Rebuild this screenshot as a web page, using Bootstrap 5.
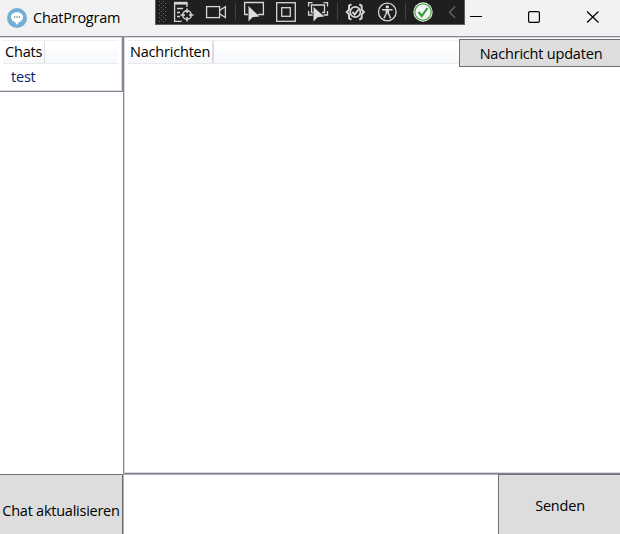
<!DOCTYPE html>
<html lang="de">
<head>
<meta charset="utf-8">
<meta name="viewport" content="width=device-width, initial-scale=1">
<title>ChatProgram</title>
<link href="https://cdn.jsdelivr.net/npm/bootstrap@5.3.0/dist/css/bootstrap.min.css" rel="stylesheet">
<style>
body{font-family:"Open Sans","Noto Sans",sans-serif;font-size:14.5px;line-height:20px;color:#000;letter-spacing:-.2px}
.window{height:534px;width:620px;background:#fff}
.titlebar{height:36px;background:#f2f2f2;padding-left:7px}
.app-title{margin-left:6px;letter-spacing:-.25px}
.debugbar{left:155px;top:0;width:310px;height:25px;background:#1f1f1f;border:solid #625d5c;border-width:0 1px 1px}
.debugbar svg{margin-left:-1px}
.caption-buttons{width:150px;height:34px}
.sidebar{width:123px}
.chat-list{height:56px;border:solid #828790;border-width:1px 1px 1px 0;box-shadow:inset 0 -1px #d5d8e0,inset -1px 0 #d5d8e0,inset 0 1px #d5d8e0;padding:3px 4px 0 3px}
.messages{height:438px;border:solid #828790;border-width:1px 0 1px 1px;box-shadow:inset 0 1px #d5d8e0,inset 1px 0 #d8dbe1,inset 0 -1px #d5d8e0;padding:3px 0 0 4px}
.column-head{height:24px;background:linear-gradient(#fff 40%,#fbfcfd 42%,#f7f8fa);border-top:1px solid #f0f0f0;border-bottom:1px solid #e8ebee}
.column-head span{display:block;padding:1px 0 0 2px;border-right:1px solid #dcdfe2;height:22px;white-space:nowrap}
.chats-col{width:42px}
.column-head .news-col{width:86px;border-right-width:2px}
.chat-entry{color:#042271;padding:3px 0 0 8px}
.wpf-btn{background:#ddd;border:1px solid #707070;border-radius:0;color:#000;font-size:inherit;line-height:20px;letter-spacing:inherit;padding:0;white-space:nowrap}
.update-btn{left:459px;top:39px;width:162px;height:28px;padding:2px 0 0 2px}
.refresh-btn{height:60px;padding-top:13px;border-left:0;border-bottom:0;letter-spacing:-.25px}
.send-btn{width:122px;border-bottom:0;border-right:0;padding:2px 0 0 1px}
.message-input{border:1px solid #abadb3;border-right-width:0;border-bottom:0;border-radius:0;resize:none;outline:0}
</style>
</head>
<body class="m-0 overflow-hidden">
<main class="window position-relative d-flex flex-column overflow-hidden">
  <header class="titlebar d-flex flex-shrink-0 justify-content-between">
    <div class="d-flex align-items-center">
      <svg width="20" height="20" viewBox="0 0 20 20"><circle cx="10" cy="10" r="10" fill="#71afd3"/><path d="M4 9C4 2.800 16 2.800 16 9c0 3-2 4.500-4 5l-2 3-2-3C6 13.500 4 12 4 9Z" fill="#fff"/><path d="M7 9h1.300M9.400 9h1.300M11.800 9h1.300" stroke="#345" stroke-width="1.200"/></svg>
      <span class="app-title">ChatProgram</span>
    </div>
    <svg class="caption-buttons" viewBox="470 0 150 34" fill="none" stroke="#000" stroke-width="1.200"><path d="M470 16.500h12M587 11.500l11.500 11M598.500 11.500l-11.500 11"/><rect x="528.600" y="11.600" width="10.800" height="10.800" rx="1.300"/></svg>
  </header>
  <div class="debugbar position-absolute">
    <svg class="d-block" width="310" height="24" viewBox="155 0 310 24" fill="none" stroke="#d6d6d6" stroke-width="1.300">
      <defs>
        <pattern id="grip" x="159" y="1" width="4" height="4" patternUnits="userSpaceOnUse"><path d="M0 0h1v1H0zM2 2h1v1H2z" fill="#666" stroke="none"/></pattern>
      </defs>
      <path d="M159 1h7v22h-7z" fill="url(#grip)" stroke="none"/>
      <path d="M174 3.200h13.500" stroke-width="2.800"/><path d="M174.600 3v18.400h7M187 3v4M177 8.500h6M177 12.500h3M177 16.500h3"/>
      <circle cx="187" cy="15" r="4.300" stroke-width="1.500"/><path d="M187 8.500v4.500M187 17v4.500M180.500 15h4.500M189 15h4.500" stroke-width="1.500"/>
      <rect x="206.600" y="6.600" width="13" height="11"/><path d="M219.500 10.500l5.900-3.900v11l-5.900-3.800"/>
      <path d="M235.500 3v17M337.500 3v17M405.500 3v17" stroke="#424242" stroke-width="1"/>
      <path d="M248 14.500h-3.400v-12h18.800v12H258"/><path d="M248.500 6v15.500l4-4.300 7-.7Z" fill="#ddd" stroke="none"/>
      <rect x="276.700" y="2.700" width="18.600" height="18.600"/><rect x="281.700" y="7.700" width="8.600" height="8.600"/>
      <path d="M308.600 6.500V2.600h4M323.500 2.600h4v4M308.600 11v4h4M327.500 11v4h-4M313 12.500h-1.500v-7.500h13v7.500H322"/><path d="M313.500 7v14.500l4-4.200 6.700-.7Z" fill="#ddd" stroke="none"/>
      <path d="M351.500 4.700H351q-2 0-2 2v3l-2.200 2.300 2.200 2.300v3q0 2 2 2h.500M359.200 4.700h.500q2 0 2 2v3l2.200 2.300-2.200 2.300v3q0 2-2 2h-.500" stroke-width="2"/>
      <circle cx="355.300" cy="12" r="5.100" stroke-width="1.700"/><path d="M352.500 12l2.200 2.500 3.800-5" stroke-width="1.900"/>
      <circle cx="387.300" cy="12" r="8.800"/><circle cx="387.300" cy="6.900" r="1.700" fill="#ddd" stroke="none"/><path d="M382 9.700h10.600M387.300 9.500v4M386.300 10v3.200l-2.300 5M388.300 10v3.200l2.300 5" stroke-width="1.500"/>
      <circle cx="423" cy="12" r="9.700" fill="#f4f4f4" stroke="none"/><circle cx="423" cy="12" r="8.200" stroke="#52a852" stroke-width="1.300"/><path d="M418.500 12l3.300 4 5.700-8" stroke="#2e9b36" stroke-width="2.100"/>
      <path d="M455.200 6.500l-5.700 5.700 5.700 5.700" stroke="#666"/>
    </svg>
  </div>
  <div class="d-flex flex-grow-1">
    <aside class="sidebar d-flex flex-column justify-content-between flex-shrink-0">
      <section class="chat-list">
        <div class="column-head"><span class="chats-col">Chats</span></div>
        <div class="chat-entry">test</div>
      </section>
      <button class="btn wpf-btn refresh-btn w-100">Chat aktualisieren</button>
    </aside>
    <div class="d-flex flex-column flex-grow-1">
      <section class="messages"><div class="column-head"><span class="news-col">Nachrichten</span></div></section>
      <div class="d-flex flex-grow-1">
        <textarea class="message-input flex-grow-1 p-1" aria-label="Nachricht"></textarea>
        <button class="btn wpf-btn send-btn">Senden</button>
      </div>
    </div>
  </div>
  <button class="btn wpf-btn update-btn position-absolute">Nachricht updaten</button>
</main>
<script src="https://cdn.jsdelivr.net/npm/bootstrap@5.3.0/dist/js/bootstrap.bundle.min.js"></script>
</body>
</html>
